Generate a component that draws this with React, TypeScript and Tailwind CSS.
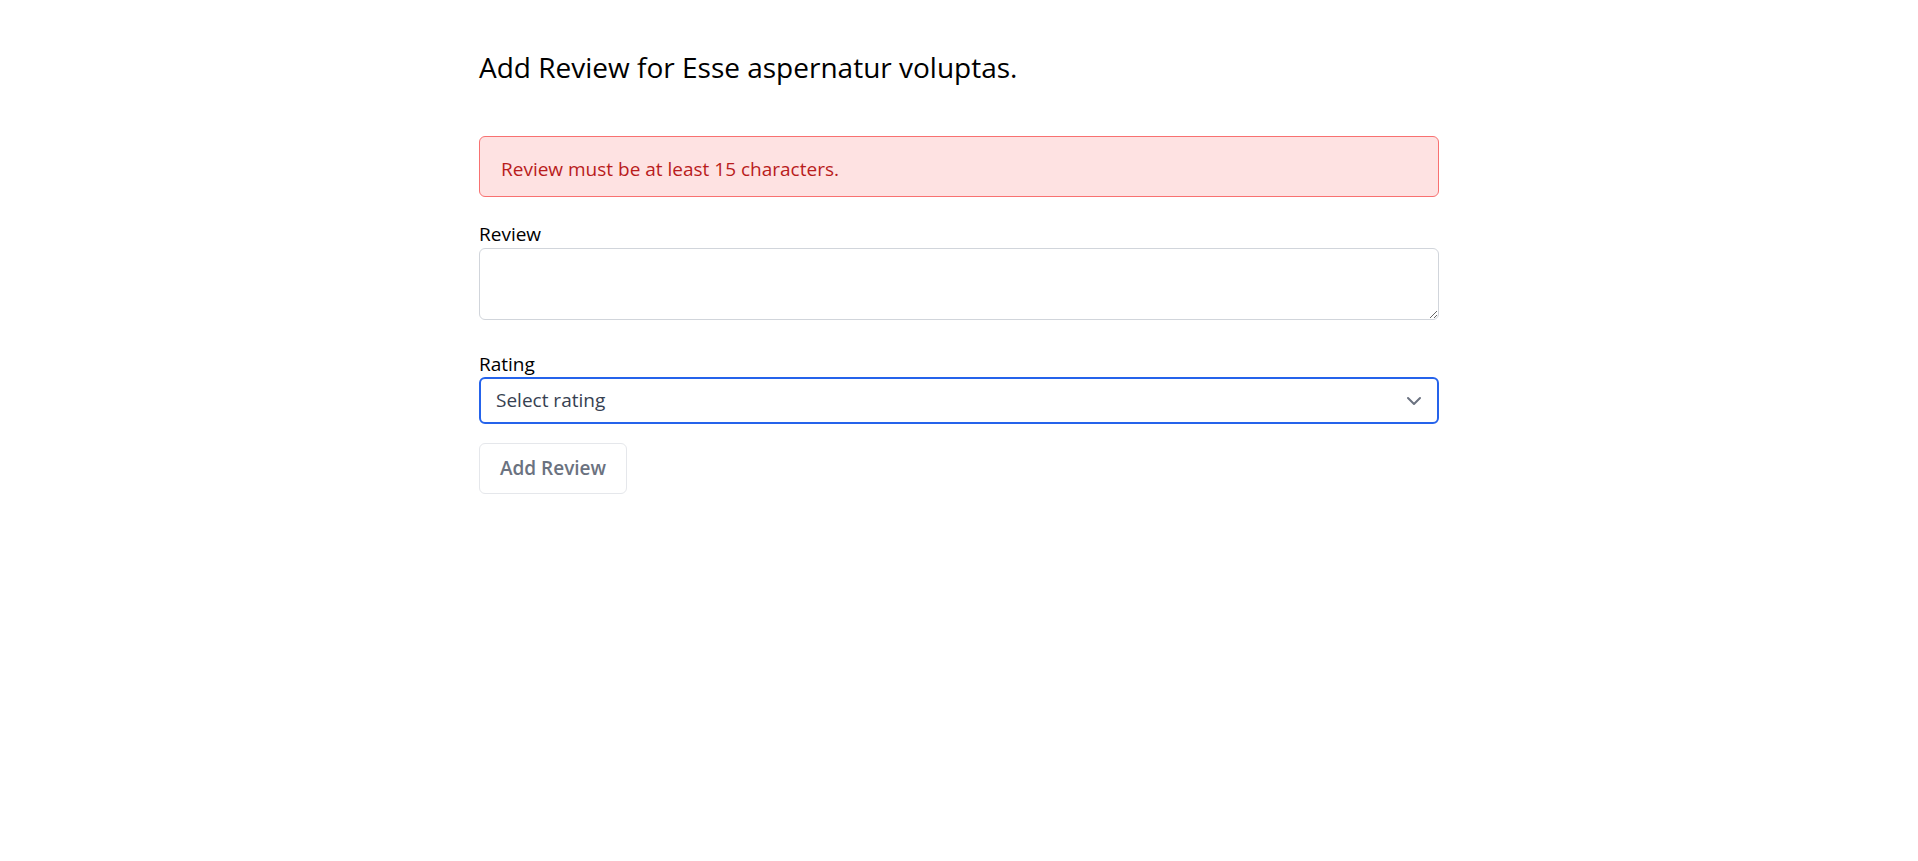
import { ChevronDown } from "lucide-react";

export default function App() {
  return (
    <div className="min-h-screen bg-white font-['Open_Sans',sans-serif] text-black">
      <div className="mx-auto w-[960px] pt-[49px]">
        <h1 className="text-[28px] leading-[36px]">Add Review for Esse aspernatur voluptas.</h1>

        <div className="mt-[51px] rounded-md border border-[#f87171] bg-[#fee2e2] pl-[21px] pr-4 pt-[20px] pb-[15px] text-[19px] leading-6 text-[#b91c1c]">
          Review must be at least 15 characters.
        </div>

        <form className="mt-[25px]">
          <label className="block text-[19px] leading-6">Review</label>
          <textarea className="mt-[2px] block h-[72px] w-full rounded-md border border-[#d1d5db] px-4 py-2 text-[19px] outline-none" />

          <label className="mt-[32px] block text-[19px] leading-6">Rating</label>
          <div className="relative mt-px">
            <select
              defaultValue=""
              className="block h-[47px] w-full appearance-none rounded-md border-2 border-[#2563eb] bg-white px-[15px] text-[19px] text-[#374151] outline-none"
            >
              <option value="">Select rating</option>
              <option value="1">1</option>
              <option value="2">2</option>
              <option value="3">3</option>
              <option value="4">4</option>
              <option value="5">5</option>
            </select>
            <ChevronDown
              className="pointer-events-none absolute right-[13px] top-1/2 h-6 w-6 -translate-y-1/2 text-[#6b7280]"
              strokeWidth={2}
            />
          </div>

          <button
            type="button"
            className="mt-[19px] h-[51px] w-[148px] rounded-md border border-[#e5e7eb] bg-white text-[19px] font-semibold text-[#6b7280]"
          >
            Add Review
          </button>
        </form>
      </div>
    </div>
  );
}
